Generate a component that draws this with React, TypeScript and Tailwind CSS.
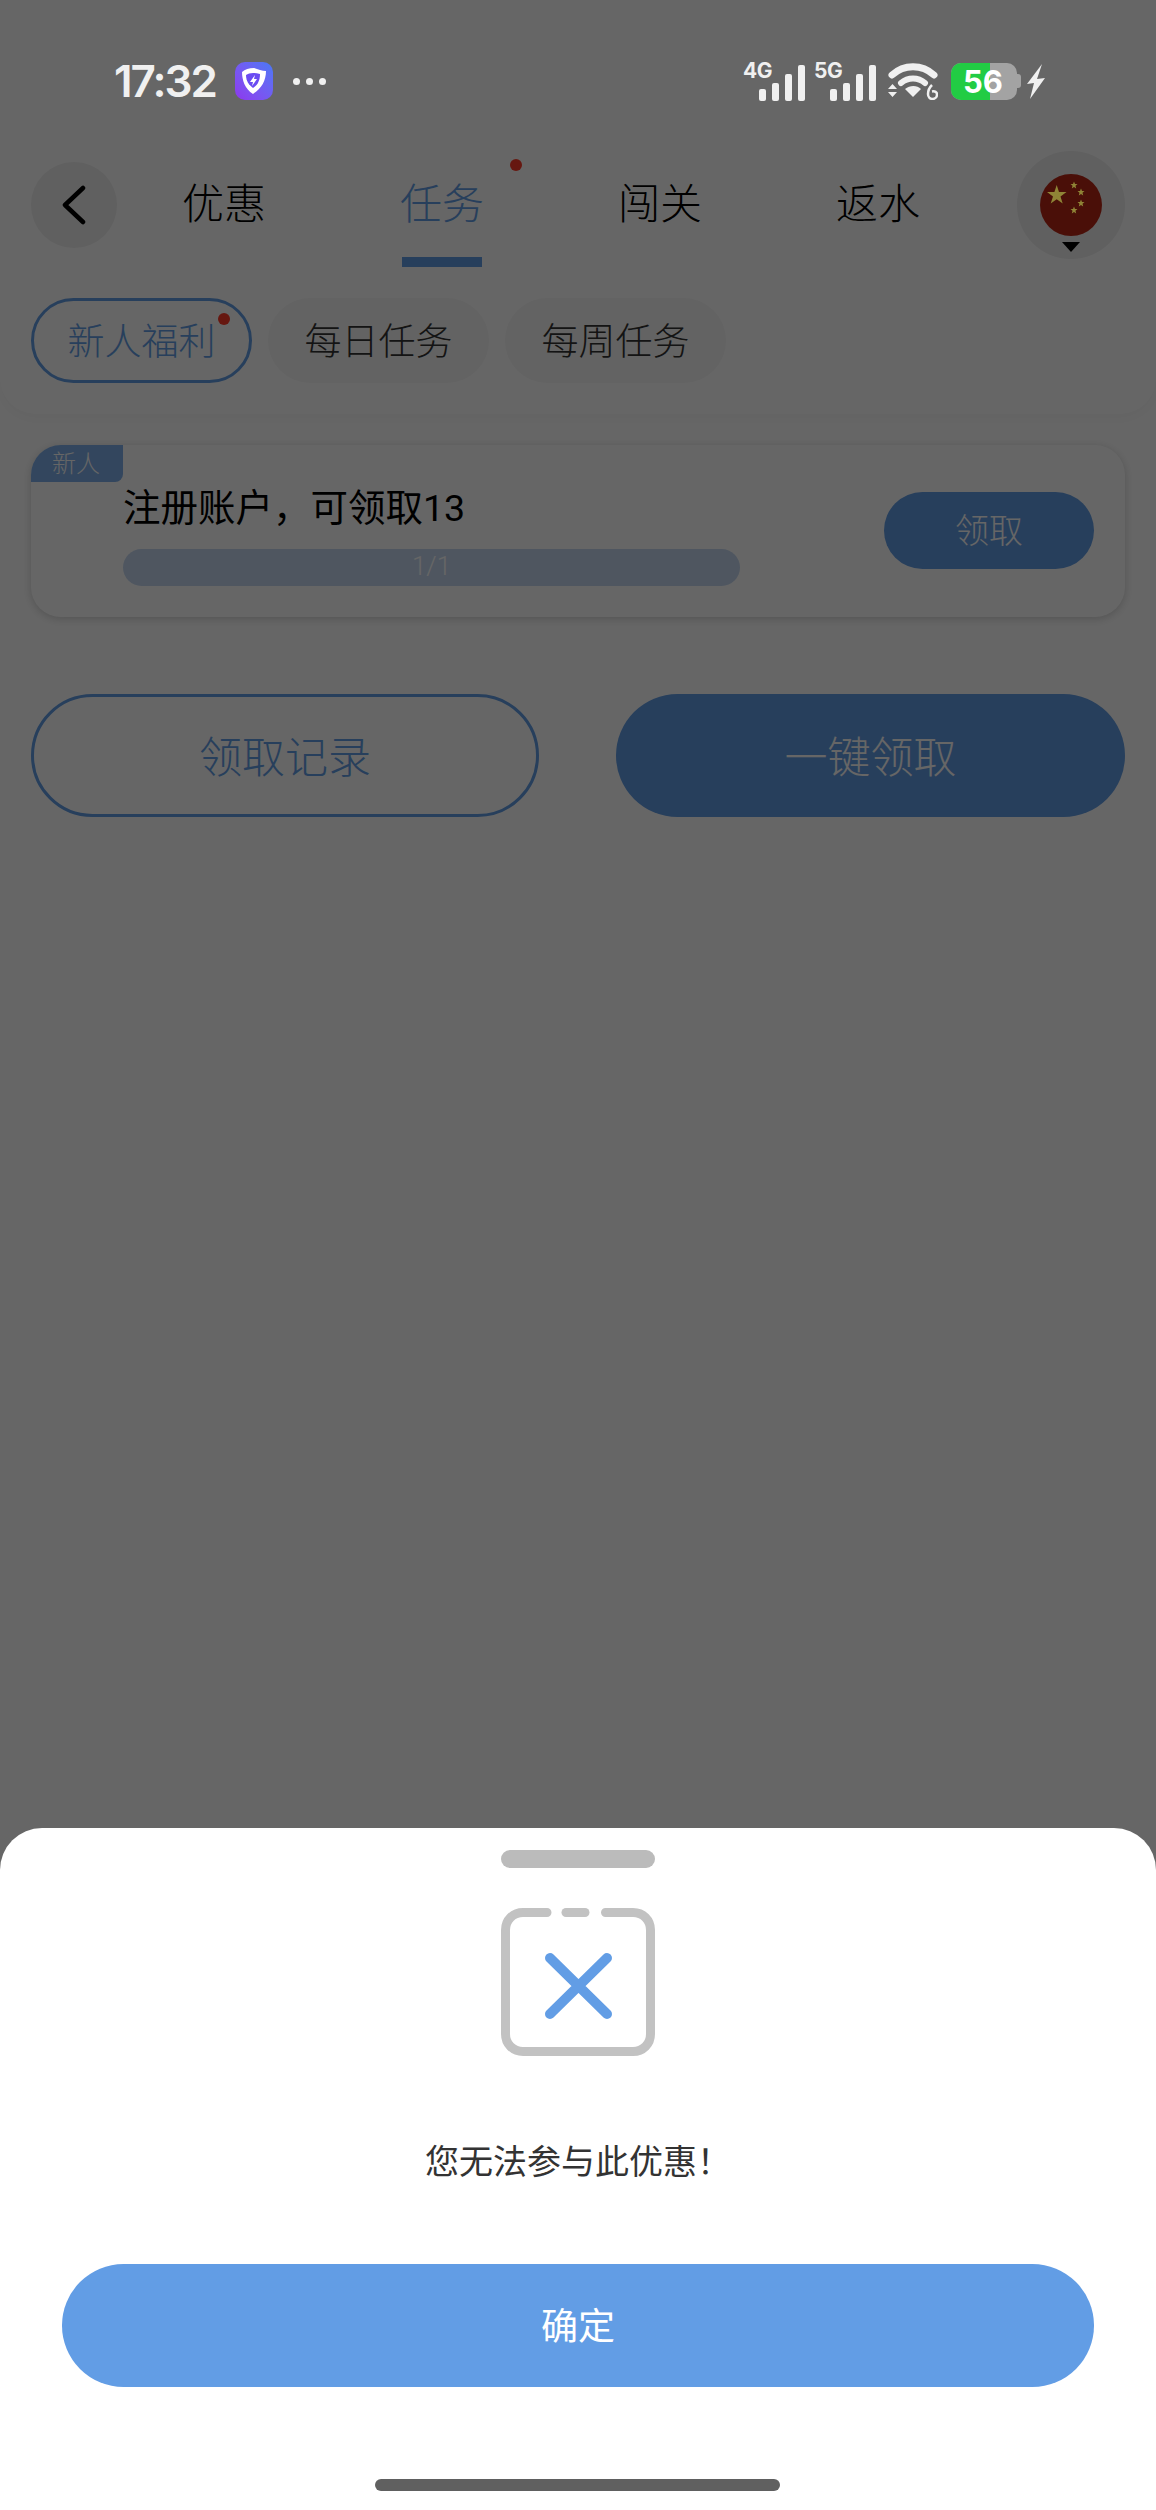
import { FC } from "react";

const cjk = "font-['Noto_Sans_CJK_SC','Noto_Sans',sans-serif]";

const Bars: FC<{ label: string }> = ({ label }) => (
  <div className="relative w-[62px] h-[40px] flex items-end justify-end gap-[6px]">
    <span className="absolute left-0 top-[-1px] text-[21px] leading-[21px] font-bold tracking-[-0.5px] text-[#f0f0f0] font-['Inter',sans-serif]">
      {label}
    </span>
    <span className="w-[7px] h-[12px] rounded-[2px] bg-[#f0f0f0]" />
    <span className="w-[7px] h-[18px] rounded-[2px] bg-[#f0f0f0]" />
    <span className="w-[7px] h-[27px] rounded-[2px] bg-[#f0f0f0]" />
    <span className="w-[7px] h-[36px] rounded-[2px] bg-[#f0f0f0]" />
  </div>
);

const StatusBar = () => (
  <div className="absolute top-[62px] left-[114px] right-[111px] h-[38px] z-20 flex items-center justify-between">
    <div className="flex items-center">
      <span className="w-[102px] text-[44px] leading-[38px] font-semibold tracking-[-2px] text-[#f0f0f0] font-['Inter',sans-serif]">
        17:32
      </span>
      <div className="ml-[19px] w-[38px] h-[38px] rounded-[10px] bg-linear-to-tr from-[#8d35ee] to-[#4678f6] flex items-center justify-center">
        <svg width="26" height="28" viewBox="0 0 26 28">
          <path
            d="M13 1C8 1 4 2.500 1 5C1 13 4 22 12 27C20 22 25 14 25 4C21 4 17 2 13 1Z"
            fill="#fff"
          />
          <path
            d="M5 8C8 6 12 5 19 7C19 13 17 18 12 21C8 18 5 14 5 8Z"
            fill="#6a4cf2"
          />
          <path d="M14 8L9 15H12L11 19L16 12H13Z" fill="#fff" />
        </svg>
      </div>
      <div className="ml-[20px] flex gap-[6px]">
        <span className="w-[7px] h-[7px] rounded-full bg-[#f0f0f0]" />
        <span className="w-[7px] h-[7px] rounded-full bg-[#f0f0f0]" />
        <span className="w-[7px] h-[7px] rounded-full bg-[#f0f0f0]" />
      </div>
    </div>
    <div className="flex items-center">
      <Bars label="4G" />
      <div className="ml-[9px]">
        <Bars label="5G" />
      </div>
      <svg className="ml-[12px]" width="50" height="38" viewBox="0 0 50 38">
        <path
          d="M4 13C16 2 34 2 46 13"
          fill="none"
          stroke="#f0f0f0"
          strokeWidth="7"
          strokeLinecap="round"
        />
        <path
          d="M13 21C20 15 30 15 37 21"
          fill="none"
          stroke="#f0f0f0"
          strokeWidth="6"
          strokeLinecap="round"
        />
        <path d="M17 27C22 23 29 23 33 27L25 35Z" fill="#f0f0f0" />
        <path d="M0 27L4.500 22L9 27ZM0 30L9 30L4.500 35Z" fill="#f0f0f0" />
        <path
          d="M44 23C41 26 40 29 40 32C40 35 42 37 44.500 37C47 37 49 35 49 32.500C49 30 47 29 44 29.500"
          fill="none"
          stroke="#f0f0f0"
          strokeWidth="2.500"
        />
      </svg>
      <div className="relative ml-[13px] w-[66px] h-[37px] rounded-[10px] bg-[#a3a3a3] overflow-hidden">
        <div className="w-[39px] h-full bg-[#22cc44]" />
        <span className="absolute inset-0 flex items-center justify-center pr-[2px] text-[31px] font-bold leading-none text-white font-['Inter',sans-serif]">
          56
        </span>
      </div>
      <span className="w-[4px] h-[14px] rounded-r-[3px] bg-[#a3a3a3]" />
      <svg className="ml-[6px]" width="18" height="35" viewBox="0 0 18 35">
        <path d="M15 0L0 20L7 19L3 35L18 14L10 15Z" fill="#f0f0f0" />
      </svg>
    </div>
  </div>
);

// the flag sits above the dim layer in the reference, so it carries its dimmed colours itself
const Flag = () => (
  <svg width="62" height="62" viewBox="0 0 62 62" className="relative z-20">
    <circle cx="31" cy="31" r="31" fill="#4a0f08" />
    <path
      d="M16.700 11L19 18H26.500L20.500 22.500L22.700 29.500L16.700 25.200L10.700 29.500L13 22.500L7 18H14.400Z"
      fill="#8f8436"
    />
    <path d="M34 7.500L35 10H37.500L35.500 11.800L36.200 14.500L34 13L31.800 14.500L32.500 11.800L30.500 10H33Z" fill="#8f8436" />
    <path d="M41 14.500L42 17H44.500L42.500 18.800L43.200 21.500L41 20L38.800 21.500L39.500 18.800L37.500 17H40Z" fill="#8f8436" />
    <path d="M41 25.500L42 28H44.500L42.500 29.800L43.200 32.500L41 31L38.800 32.500L39.500 29.800L37.500 28H40Z" fill="#8f8436" />
    <path d="M34 32.500L35 35H37.500L35.500 36.800L36.200 39.500L34 38L31.800 39.500L32.500 36.800L30.500 35H33Z" fill="#8f8436" />
  </svg>
);

const Tab: FC<{ label: string; active?: boolean; dot?: boolean }> = ({
  label,
  active,
  dot,
}) => (
  <div className="relative w-[218px] flex flex-col items-center">
    <span
      className={`mt-[20px] h-[60px] text-[42px] leading-[60px] font-light ${
        active ? "text-[#629de5]" : "text-black"
      }`}
    >
      {label}
    </span>
    {active && <span className="mt-[26px] w-[80px] h-[10px] bg-[#629de5]" />}
    {dot && (
      <span className="absolute left-[177px] top-[8px] w-[12px] h-[12px] rounded-full bg-[#ff3a28]" />
    )}
  </div>
);

const Pill: FC<{ label: string; active?: boolean }> = ({ label, active }) => (
  <div
    className={`relative w-[221px] h-[85px] pb-[1px] rounded-full flex items-center justify-center text-[37px] font-light ${
      active
        ? "border-[3px] border-[#629de5] text-[#629de5]"
        : "bg-[#f7f7f7] text-[#333]"
    }`}
  >
    {label}
    {active && (
      <span className="absolute right-[19px] top-[12px] w-[12px] h-[12px] rounded-full bg-[#ff3a28]" />
    )}
  </div>
);

export default function App() {
  return (
    <div
      className={`relative w-[1156px] h-[2510px] overflow-hidden bg-[#ffffff] ${cjk}`}
    >
      {/* header */}
      <div className="h-[414px] rounded-b-[36px] bg-white shadow-[0_4px_16px_rgba(0,0,0,0.03)] px-[31px] pt-[151px]">
        <div className="h-[108px] flex items-start">
          <div className="mt-[11px] w-[86px] h-[86px] rounded-full bg-[#f0f0f0] flex items-center justify-center">
            <svg width="26" height="40" viewBox="0 0 26 40">
              <path
                d="M22 3L4 20L22 37"
                fill="none"
                stroke="#000"
                strokeWidth="4.500"
                strokeLinecap="round"
                strokeLinejoin="round"
              />
            </svg>
          </div>
          <div className="ml-[-2px] flex">
            <Tab label="优惠" />
            <Tab label="任务" active dot />
            <Tab label="闯关" />
            <Tab label="返水" />
          </div>
          <div className="ml-auto w-[108px] h-[108px] rounded-full bg-[#f0f0f0] flex flex-col items-center pt-[23px]">
            <Flag />
            <svg className="mt-[6px]" width="18" height="10" viewBox="0 0 18 10">
              <path d="M0 0H18L9 10Z" fill="#000" />
            </svg>
          </div>
        </div>
        <div className="mt-[39px] flex gap-[16px]">
          <Pill label="新人福利" active />
          <Pill label="每日任务" />
          <Pill label="每周任务" />
        </div>
      </div>

      {/* task card */}
      <div className="relative mx-[31px] mt-[31px] h-[172px] rounded-[30px] bg-white shadow-[0_2px_8px_rgba(0,0,0,0.18)] flex items-start">
        <div className="absolute left-0 top-0 w-[92px] h-[37px] pb-[3px] pr-[2px] rounded-tl-[30px] rounded-br-[8px] bg-[#7fb0ea] flex items-center justify-center text-[24px] leading-none font-light text-white">
          新人
        </div>
        <div className="ml-[92px] mt-[37px] w-[617px]">
          <div className="h-[67px] text-[37.5px] leading-[52px] text-black font-['Roboto','Noto_Sans_CJK_SC',sans-serif]">
            注册账户，可领取13
          </div>
          <div className="h-[37px] pb-[2px] rounded-full bg-[#c5d8f1] flex items-center justify-center text-[26px] font-light text-white font-['Roboto',sans-serif]">
            1/1
          </div>
        </div>
        <div className="ml-auto mr-[31px] mt-[47px] w-[210px] h-[77px] pb-[5px] rounded-full bg-[#629de5] flex items-center justify-center text-[34px] font-light text-white">
          领取
        </div>
      </div>

      {/* bottom buttons */}
      <div className="mx-[31px] mt-[77px] flex justify-between">
        <div className="w-[508px] h-[123px] pb-[3px] rounded-full border-[3px] border-[#629de5] flex items-center justify-center text-[43px] font-light text-[#629de5]">
          领取记录
        </div>
        <div className="w-[509px] h-[123px] pb-[3px] rounded-full bg-[#629de5] flex items-center justify-center text-[43px] font-light text-white">
          一键领取
        </div>
      </div>

      {/* dim layer */}
      <div className="absolute inset-0 z-10 bg-black/60" />

      <StatusBar />

      {/* bottom sheet */}
      <div className="absolute left-0 right-0 bottom-0 z-20 h-[682px] rounded-t-[42px] bg-white flex flex-col items-center pt-[22px]">
        <div className="w-[154px] h-[18px] rounded-full bg-[#bbbbbb]" />
        <svg className="mt-[40px]" width="154" height="148" viewBox="0 0 154 148">
          <path
            d="M46 4.500H22C12 4.500 4.500 12 4.500 22V126C4.500 136 12 143.500 22 143.500H132C142 143.500 149.500 136 149.500 126V22C149.500 12 142 4.500 132 4.500H104.500"
            fill="none"
            stroke="#c2c2c2"
            strokeWidth="9"
            strokeLinecap="round"
          />
          <path
            d="M65 4.500H84"
            fill="none"
            stroke="#c2c2c2"
            strokeWidth="9"
            strokeLinecap="round"
          />
          <path
            d="M49 50L106 106M106 50L49 106"
            fill="none"
            stroke="#629de5"
            strokeWidth="10"
            strokeLinecap="round"
          />
        </svg>
        <div className="mt-[79px] text-[34px] leading-[50px] text-[#333]">
          您无法参与此优惠！
        </div>
        <div className="mt-[79px] w-[1032px] h-[123px] pb-[2px] rounded-full bg-[#629de5] flex items-center justify-center text-[37px] text-white">
          确定
        </div>
        <div className="mt-[92px] ml-[-1px] w-[405px] h-[12px] rounded-full bg-[#606060]" />
      </div>
    </div>
  );
}
